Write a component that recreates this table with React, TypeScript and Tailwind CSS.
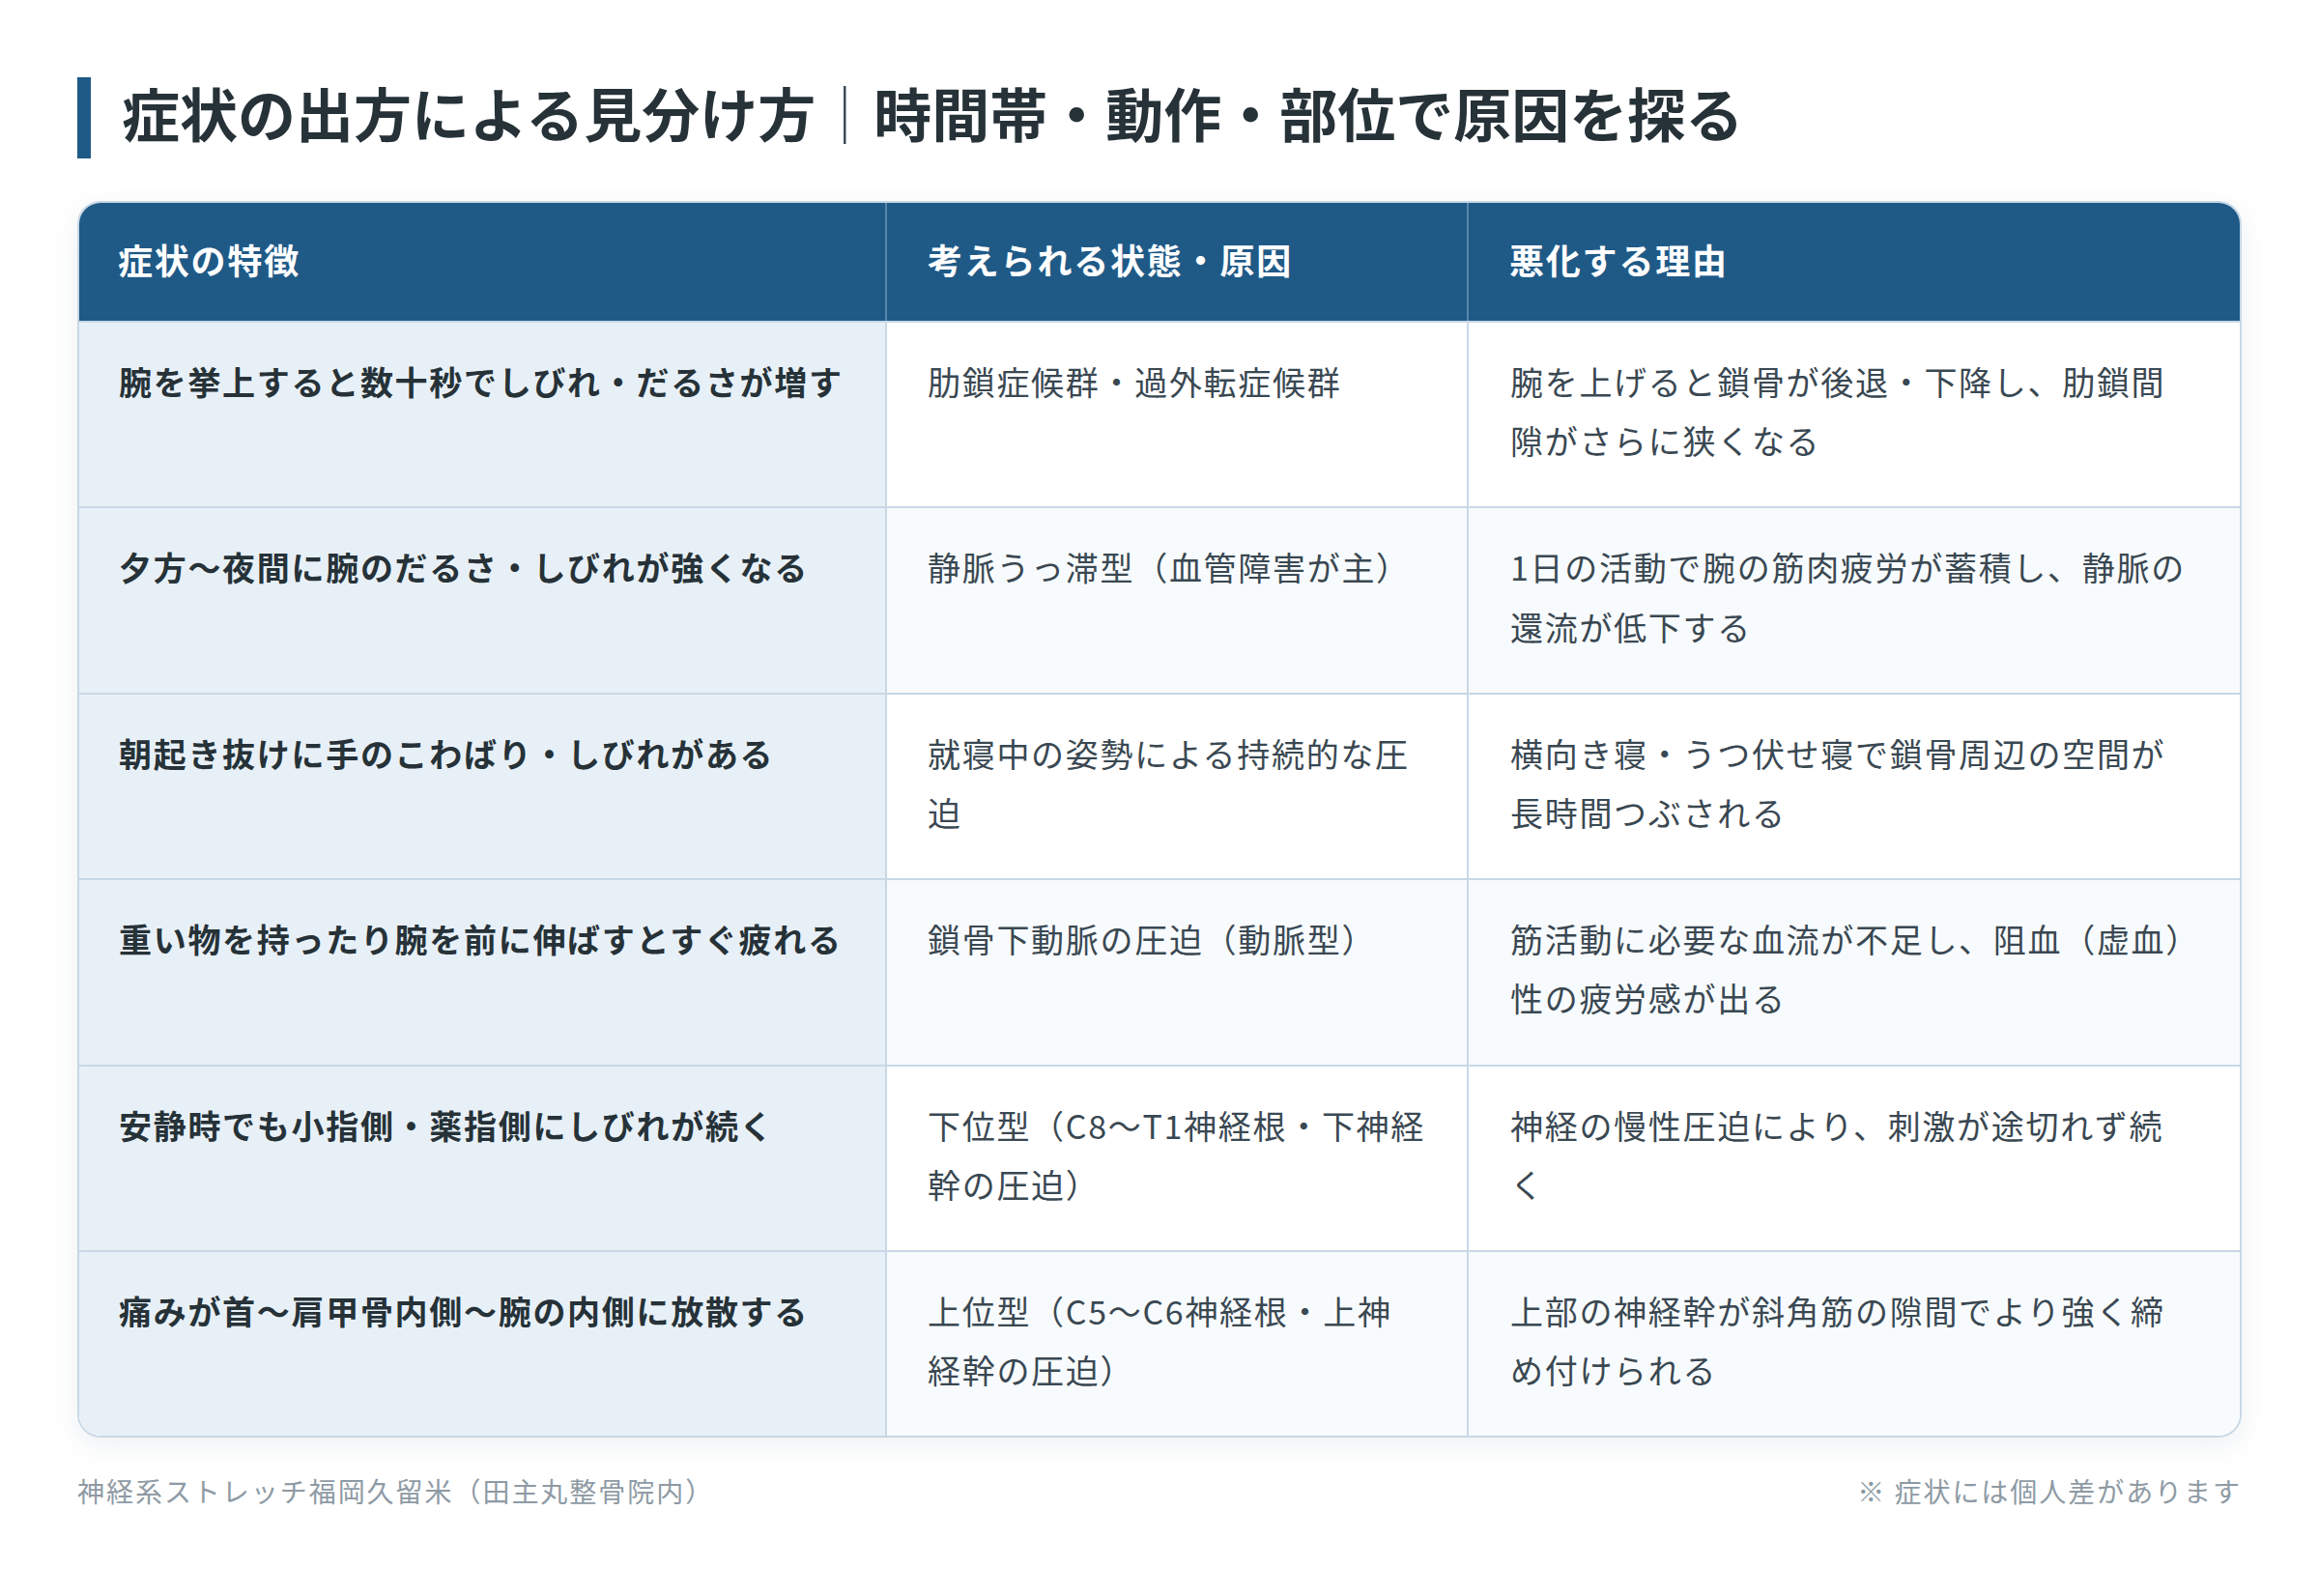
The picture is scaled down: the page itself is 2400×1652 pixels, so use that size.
const rows = [
  {
    sign: '腕を挙上すると数十秒でしびれ・だるさが増す',
    cause: '肋鎖症候群・過外転症候群',
    reason: '腕を上げると鎖骨が後退・下降し、肋鎖間隙がさらに狭くなる',
  },
  {
    sign: '夕方〜夜間に腕のだるさ・しびれが強くなる',
    cause: '静脈うっ滞型（血管障害が主）',
    reason: '1日の活動で腕の筋肉疲労が蓄積し、静脈の還流が低下する',
  },
  {
    sign: '朝起き抜けに手のこわばり・しびれがある',
    cause: '就寝中の姿勢による持続的な圧迫',
    reason: '横向き寝・うつ伏せ寝で鎖骨周辺の空間が長時間つぶされる',
  },
  {
    sign: '重い物を持ったり腕を前に伸ばすとすぐ疲れる',
    cause: '鎖骨下動脈の圧迫（動脈型）',
    reason: '筋活動に必要な血流が不足し、阻血（虚血）性の疲労感が出る',
  },
  {
    sign: '安静時でも小指側・薬指側にしびれが続く',
    cause: '下位型（C8〜T1神経根・下神経幹の圧迫）',
    reason: '神経の慢性圧迫により、刺激が途切れず続く',
  },
  {
    sign: '痛みが首〜肩甲骨内側〜腕の内側に放散する',
    cause: '上位型（C5〜C6神経根・上神経幹の圧迫）',
    reason: '上部の神経幹が斜角筋の隙間でより強く締め付けられる',
  },
];

const font = { fontFamily: '"Noto Sans CJK JP", "Noto Sans", sans-serif' };

export default function App() {
  return (
    <div className="min-h-screen w-full bg-white px-[80px] pt-[80px]" style={font}>
      {/* Title */}
      <h1 className="border-l-[14px] border-[#1f5a87] pl-[32px] pb-[12px] text-[60px] leading-[72px] font-bold text-[#263238]">
        症状の出方による見分け方<span className="font-normal text-[#3d4d58]">｜</span>時間帯・動作・部位で原因を探る
      </h1>

      {/* Table */}
      <div className="mt-[44px] rounded-[24px] border-2 border-[#c8d8e6] overflow-hidden shadow-[0_8px_28px_rgba(30,60,90,0.08)]">
        <div className="flex h-[124px] bg-[#1f5a87] border-b-2 border-[#c8d8e6] text-white font-bold text-[36px] tracking-[0.05em]">
          <div className="w-[836px] shrink-0 flex items-center pl-[40px] pb-[6px] border-r-2 border-[#5a86ab]">症状の特徴</div>
          <div className="w-[602px] shrink-0 flex items-center pl-[42px] pb-[6px] border-r-2 border-[#5a86ab]">考えられる状態・原因</div>
          <div className="flex-1 flex items-center pl-[42px] pb-[6px]">悪化する理由</div>
        </div>

        {rows.map((r, i) => (
          <div
            key={i}
            className={`flex text-[34px] leading-[1.8] tracking-[0.05em] ${
              i < rows.length - 1 ? 'border-b-2 border-[#c8d8e6]' : ''
            } ${i % 2 === 1 ? 'bg-[#f8fbfd]' : 'bg-white'}`}
          >
            <div className="w-[836px] shrink-0 bg-[#e8f0f7] border-r-2 border-[#c8d8e6] pl-[41px] pr-[16px] pt-[30px] pb-[38px] font-bold text-[#263238] min-h-[190px]">
              {r.sign}
            </div>
            <div className="w-[602px] shrink-0 border-r-2 border-[#c8d8e6] pl-[42px] pr-[42px] pt-[30px] pb-[38px] text-[#3a4852]">
              {r.cause}
            </div>
            <div className="flex-1 pl-[43px] pr-[46px] pt-[30px] pb-[38px] text-[#3a4852]">{r.reason}</div>
          </div>
        ))}
      </div>

      {/* Footer */}
      <div className="mt-[34px] flex justify-between text-[28px] leading-[42px] tracking-[0.07em] text-[#8e9aa4]">
        <span>神経系ストレッチ福岡久留米（田主丸整骨院内）</span>
        <span>※ 症状には個人差があります</span>
      </div>
    </div>
  );
}
